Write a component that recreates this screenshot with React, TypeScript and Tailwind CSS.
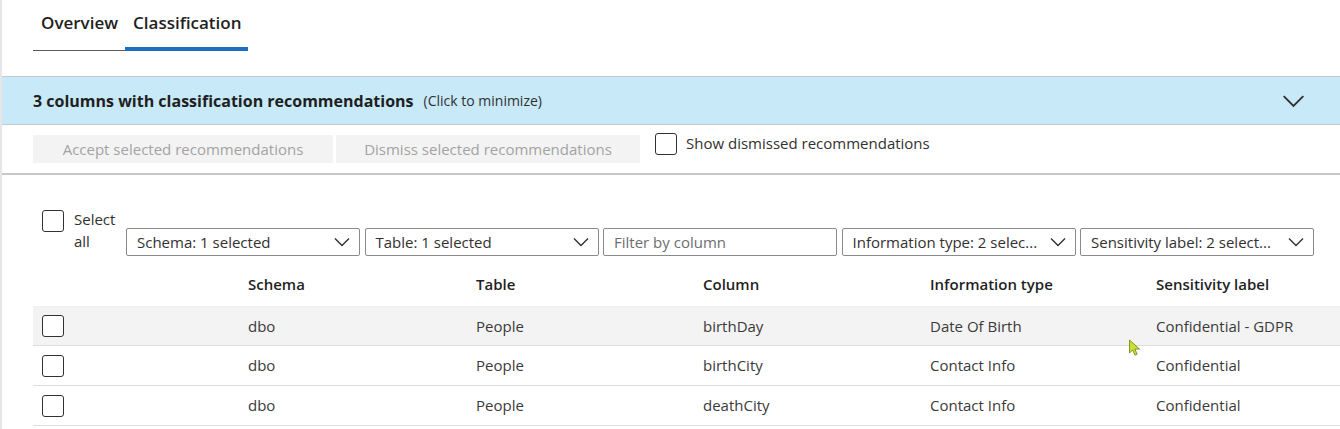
import React from "react";

const rows = [
  { schema: "dbo", table: "People", column: "birthDay", info: "Date Of Birth", label: "Confidential - GDPR", hover: true },
  { schema: "dbo", table: "People", column: "birthCity", info: "Contact Info", label: "Confidential", hover: false },
  { schema: "dbo", table: "People", column: "deathCity", info: "Contact Info", label: "Confidential", hover: false },
];

const filters = [
  { text: "Schema: 1 selected", dropdown: true },
  { text: "Table: 1 selected", dropdown: true },
  { text: "Filter by column", dropdown: false },
  { text: "Information type: 2 selec...", dropdown: true },
  { text: "Sensitivity label: 2 select...", dropdown: true },
];

function Chevron({ className }: { className?: string }) {
  return (
    <svg viewBox="0 0 16 10" fill="none" stroke="currentColor" strokeWidth="1.4" className={className}>
      <path d="M1 1.5l7 7 7-7" />
    </svg>
  );
}

function Checkbox() {
  return <div className="w-[22px] h-[22px] rounded-[3px] border border-[#323130] bg-white shrink-0" />;
}

export default function App() {
  return (
    <div
      className="relative w-[1340px] h-[429px] overflow-hidden bg-white border-l-2 border-[#e6e6e6] text-[#323130]"
      style={{ fontFamily: '"Open Sans", "Noto Sans", sans-serif' }}
    >
      {/* tabs */}
      <div className="flex pl-[31px] h-[51px]">
        <div className="w-[92px] pl-[8px] pt-[10px] border-b border-[#5a5a5a] text-[17px] font-semibold text-[#1f1f1f]">Overview</div>
        <div className="w-[123px] pl-[8px] pt-[10px] border-b-4 border-[#1b6ec2] text-[17px] font-semibold text-[#1f1f1f]">Classification</div>
      </div>

      {/* banner */}
      <div className="mt-[25px] h-[49px] bg-[#c7e9f8] border-t border-[#a9d9e8] border-b border-[#c4c8cc] flex items-center pl-[31px] pr-[34px]">
        <span className="text-[16px] font-bold text-[#1f1f1f]">3 columns with classification recommendations</span>
        <span className="ml-[10px] text-[14px] text-[#323130]">(Click to minimize)</span>
        <Chevron className="ml-auto w-[25px] h-[14px] text-[#323130]" />
      </div>

      {/* actions */}
      <div className="h-[50px] border-b-2 border-[#c8c8c8] flex items-start pl-[31px] pt-[10px]">
        <div className="w-[300px] h-[28px] bg-[#f3f3f3] flex items-center justify-center text-[15px] text-[#a3a3a3]">Accept selected recommendations</div>
        <div className="ml-[3px] w-[304px] h-[28px] bg-[#f3f3f3] flex items-center justify-center text-[15px] text-[#a3a3a3]">Dismiss selected recommendations</div>
        <div className="ml-[15px] -mt-[2px] flex items-start">
          <Checkbox />
          <span className="ml-[9px] mt-[-1px] text-[15px] text-[#323130]">Show dismissed recommendations</span>
        </div>
      </div>

      {/* filters */}
      <div className="flex items-start pl-[40px] pt-[35px]">
        <Checkbox />
        <div className="ml-[10px] w-[52px] text-[15px] leading-[22px] -mt-[2px] text-[#323130]">
          Select
          <br />
          all
        </div>
        <div className="mt-[18px] flex gap-[4.5px]">
          {filters.map((f) => (
            <div
              key={f.text}
              className={`w-[234px] h-[28px] border border-[#8a8a8a] rounded-[2px] flex items-center pl-[10px] pr-[9px] text-[15px] ${f.dropdown ? "text-[#323130]" : "text-[#6e6e6e]"}`}
            >
              <span className="whitespace-nowrap">{f.text}</span>
              {f.dropdown && <Chevron className="ml-auto w-[16px] h-[10px] text-[#323130]" />}
            </div>
          ))}
        </div>
      </div>

      {/* table */}
      <div className="ml-[31px] mt-[13px]">
        <div className="grid grid-cols-[215px_228px_227px_227px_226px_1fr] h-[37px] pb-[6px] items-center text-[15px] font-semibold text-[#1f1f1f]">
          <div />
          <div>Schema</div>
          <div>Table</div>
          <div>Column</div>
          <div>Information type</div>
          <div>Sensitivity label</div>
        </div>
        {rows.map((r) => (
          <div
            key={r.column}
            className={`grid grid-cols-[215px_228px_227px_227px_226px_1fr] h-[40px] items-center border-b border-[#dedede] text-[15px] text-[#3b3a39] ${r.hover ? "bg-[#f3f3f3] border-t border-t-[#f0f0f0]" : ""}`}
          >
            <div className="pl-[9px]">
              <Checkbox />
            </div>
            <div>{r.schema}</div>
            <div>{r.table}</div>
            <div>{r.column}</div>
            <div>{r.info}</div>
            <div>{r.label}</div>
          </div>
        ))}
      </div>

      {/* mouse cursor */}
      <svg viewBox="0 0 12 18" className="absolute left-[1126px] top-[339px] w-[13px] h-[18px]">
        <path d="M1 1v13l3.2-3 2.3 5.2 2.2-1-2.3-5.1H11z" fill="#c8e032" stroke="#6f7d12" strokeWidth="0.8" />
      </svg>
    </div>
  );
}
